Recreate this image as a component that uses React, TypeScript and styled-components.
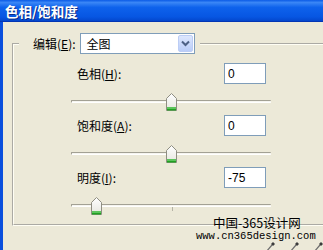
import React from 'react'
import styled, { createGlobalStyle } from 'styled-components'

const CJK = `"Noto Sans CJK SC", "Liberation Sans", sans-serif`

const GlobalStyle = createGlobalStyle`
  html, body {
    margin: 0;
    padding: 0;
    background: #ECE9D8;
  }
`

type Adjust = {
  label: string
  key: string
  value: number
  min: number
  max: number
}

const ADJUSTS: Adjust[] = [
  { label: '色相', key: 'H', value: 0, min: -180, max: 180 },
  { label: '饱和度', key: 'A', value: 0, min: -100, max: 100 },
  { label: '明度', key: 'I', value: -75, min: -100, max: 100 },
]

const TRACK_W = 200
const THUMB_W = 11

const Window = styled.div`
  position: relative;
  width: 323px;
  height: 250px;
  overflow: hidden;
  display: flex;
  flex-direction: column;
  background: #ECE9D8;
  font-family: ${CJK};
  font-size: 12px;
  line-height: 14px;
  color: #000;
`

const TitleBar = styled.div`
  flex: none;
  height: 21px;
  display: flex;
  align-items: center;
  padding-left: 5px;
  border-bottom: 1px solid #0335B4;
  background: linear-gradient(
    #0B5BE6 0%,
    #3A86F6 12%,
    #0E62EC 35%,
    #0756E2 80%,
    #0447CC 100%
  );
  color: #fff;
  font-size: 13.5px;
  font-weight: bold;
  text-shadow: 1px 1px 0 #0B2C86;
`

const Body = styled.div`
  flex: 1;
  display: flex;
  flex-direction: column;
  border-left: 3px solid #0A4FDD;
  padding: 11px 0 0 9px;
`

const Group = styled.fieldset`
  margin: 0;
  width: 340px;
  min-width: 0;
  padding: 9px 0 9px 0;
  border: 2px groove #FFFEF4;
`

const Legend = styled.legend`
  margin-left: 5px;
  padding: 0 5px 0 14px;
`

const LegendInner = styled.div`
  display: flex;
  align-items: center;
  gap: 4px;
`

const Label = styled.span`
  white-space: nowrap;
`

const Select = styled.div`
  width: 115px;
  height: 21px;
  box-sizing: border-box;
  display: flex;
  align-items: center;
  justify-content: space-between;
  padding: 0 1px 0 6px;
  border: 1px solid #7F9DB9;
  background: #fff;
`

const SelectButton = styled.div`
  width: 15px;
  height: 17px;
  box-sizing: border-box;
  display: flex;
  align-items: center;
  justify-content: center;
  border: 1px solid #BCCDF5;
  border-radius: 2px;
  background: linear-gradient(#DDE7FD, #BACDF8);
`

const Rows = styled.div`
  display: flex;
  flex-direction: column;
  gap: 4px;
  margin-left: 57px;
`

const Row = styled.div`
  display: flex;
  flex-direction: column;
`

const FieldLine = styled.div`
  width: 195px;
  height: 21px;
  display: flex;
  align-items: center;
  justify-content: space-between;
  padding-left: 6px;
  box-sizing: border-box;
`

const NumberBox = styled.input`
  width: 42px;
  height: 21px;
  box-sizing: border-box;
  margin: 0;
  padding: 0 3px;
  border: 1px solid #7F9DB9;
  background: #fff;
  font-family: "Liberation Sans", sans-serif;
  font-size: 12px;
  color: #000;
  outline: none;
`

const Slider = styled.div`
  position: relative;
  width: ${TRACK_W}px;
  height: 18px;
  margin-top: 9px;
  padding-top: 7px;
  box-sizing: border-box;
`

const Track = styled.div`
  height: 3px;
  box-sizing: border-box;
  border-top: 1px solid #A3A194;
  border-left: 1px solid #A3A194;
  border-bottom: 1px solid #fff;
  border-radius: 1px;
  background: #F6F5EF;
`

const Tick = styled.div`
  position: absolute;
  left: 101px;
  top: 10px;
  width: 1px;
  height: 4px;
  background: #B5B3A6;
`

const Thumb = styled.svg`
  position: absolute;
  top: 0;
  display: block;
`

const ToolRow = styled.div`
  display: flex;
  gap: 14px;
  margin-top: 15px;
  padding-left: 253px;
`

const Watermark = styled.div`
  position: absolute;
  left: 196px;
  top: 216px;
  display: flex;
  flex-direction: column;
  align-items: flex-start;
  pointer-events: none;
`

const WatermarkTitle = styled.div`
  margin-left: 17px;
  font-family: ${CJK};
  font-size: 12.5px;
  line-height: 13px;
  color: #000;
`

const WatermarkUrl = styled.div`
  margin-top: 2px;
  font-family: "Liberation Mono", monospace;
  font-size: 10.5px;
  line-height: 11px;
  color: #000;
`

const Chevron = () => (
  <svg width="9" height="7" viewBox="0 0 9 7">
    <path d="M1 1.5 L4.5 5 L8 1.5" fill="none" stroke="#4D6185" strokeWidth="2" />
  </svg>
)

const ThumbShape: React.FC<{ left: number }> = ({ left }) => (
  <Thumb width={THUMB_W} height="18" viewBox="0 0 11 18" style={{ left }}>
    <defs>
      <linearGradient id="thumbFill" x1="0" y1="0" x2="0" y2="1">
        <stop offset="0" stopColor="#FFFFFF" />
        <stop offset="1" stopColor="#E6E6DE" />
      </linearGradient>
    </defs>
    <path d="M5.5 0.5 L10.5 5.5 L10.5 17.5 L0.5 17.5 L0.5 5.5 Z" fill="url(#thumbFill)" stroke="#8F8E82" />
    <rect x="1" y="14" width="9" height="2" fill="#5CC45C" />
    <rect x="1" y="16" width="9" height="1.5" fill="#21A121" />
  </Thumb>
)

const Eyedropper = () => (
  <svg width="10" height="12" viewBox="0 0 10 12">
    <path d="M1 11 L7 4" stroke="#6B6B6B" strokeWidth="1.2" />
    <path d="M6 3 L8 1 L10 3 L8 5 Z" fill="#3C3C3C" />
  </svg>
)

const AdjustRow: React.FC<{ item: Adjust }> = ({ item }) => {
  const ratio = (item.value - item.min) / (item.max - item.min)
  const left = ratio * TRACK_W - THUMB_W / 2
  return (
    <Row>
      <FieldLine>
        <Label>
          {item.label}(<u>{item.key}</u>):
        </Label>
        <NumberBox readOnly value={String(item.value)} />
      </FieldLine>
      <Slider>
        <Track />
        <Tick />
        <ThumbShape left={left} />
      </Slider>
    </Row>
  )
}

export default function App() {
  return (
    <>
      <GlobalStyle />
      <Window>
        <TitleBar>色相/饱和度</TitleBar>
        <Body>
          <Group>
            <Legend>
              <LegendInner>
                <Label>
                  编辑(<u>E</u>):
                </Label>
                <Select>
                  <span>全图</span>
                  <SelectButton>
                    <Chevron />
                  </SelectButton>
                </Select>
              </LegendInner>
            </Legend>
            <Rows>
              {ADJUSTS.map((item) => (
                <AdjustRow key={item.key} item={item} />
              ))}
            </Rows>
          </Group>
          <ToolRow>
            <Eyedropper />
            <Eyedropper />
            <Eyedropper />
          </ToolRow>
        </Body>
        <Watermark>
          <WatermarkTitle>中国-365设计网</WatermarkTitle>
          <WatermarkUrl>www.cn365design.com</WatermarkUrl>
        </Watermark>
      </Window>
    </>
  )
}
